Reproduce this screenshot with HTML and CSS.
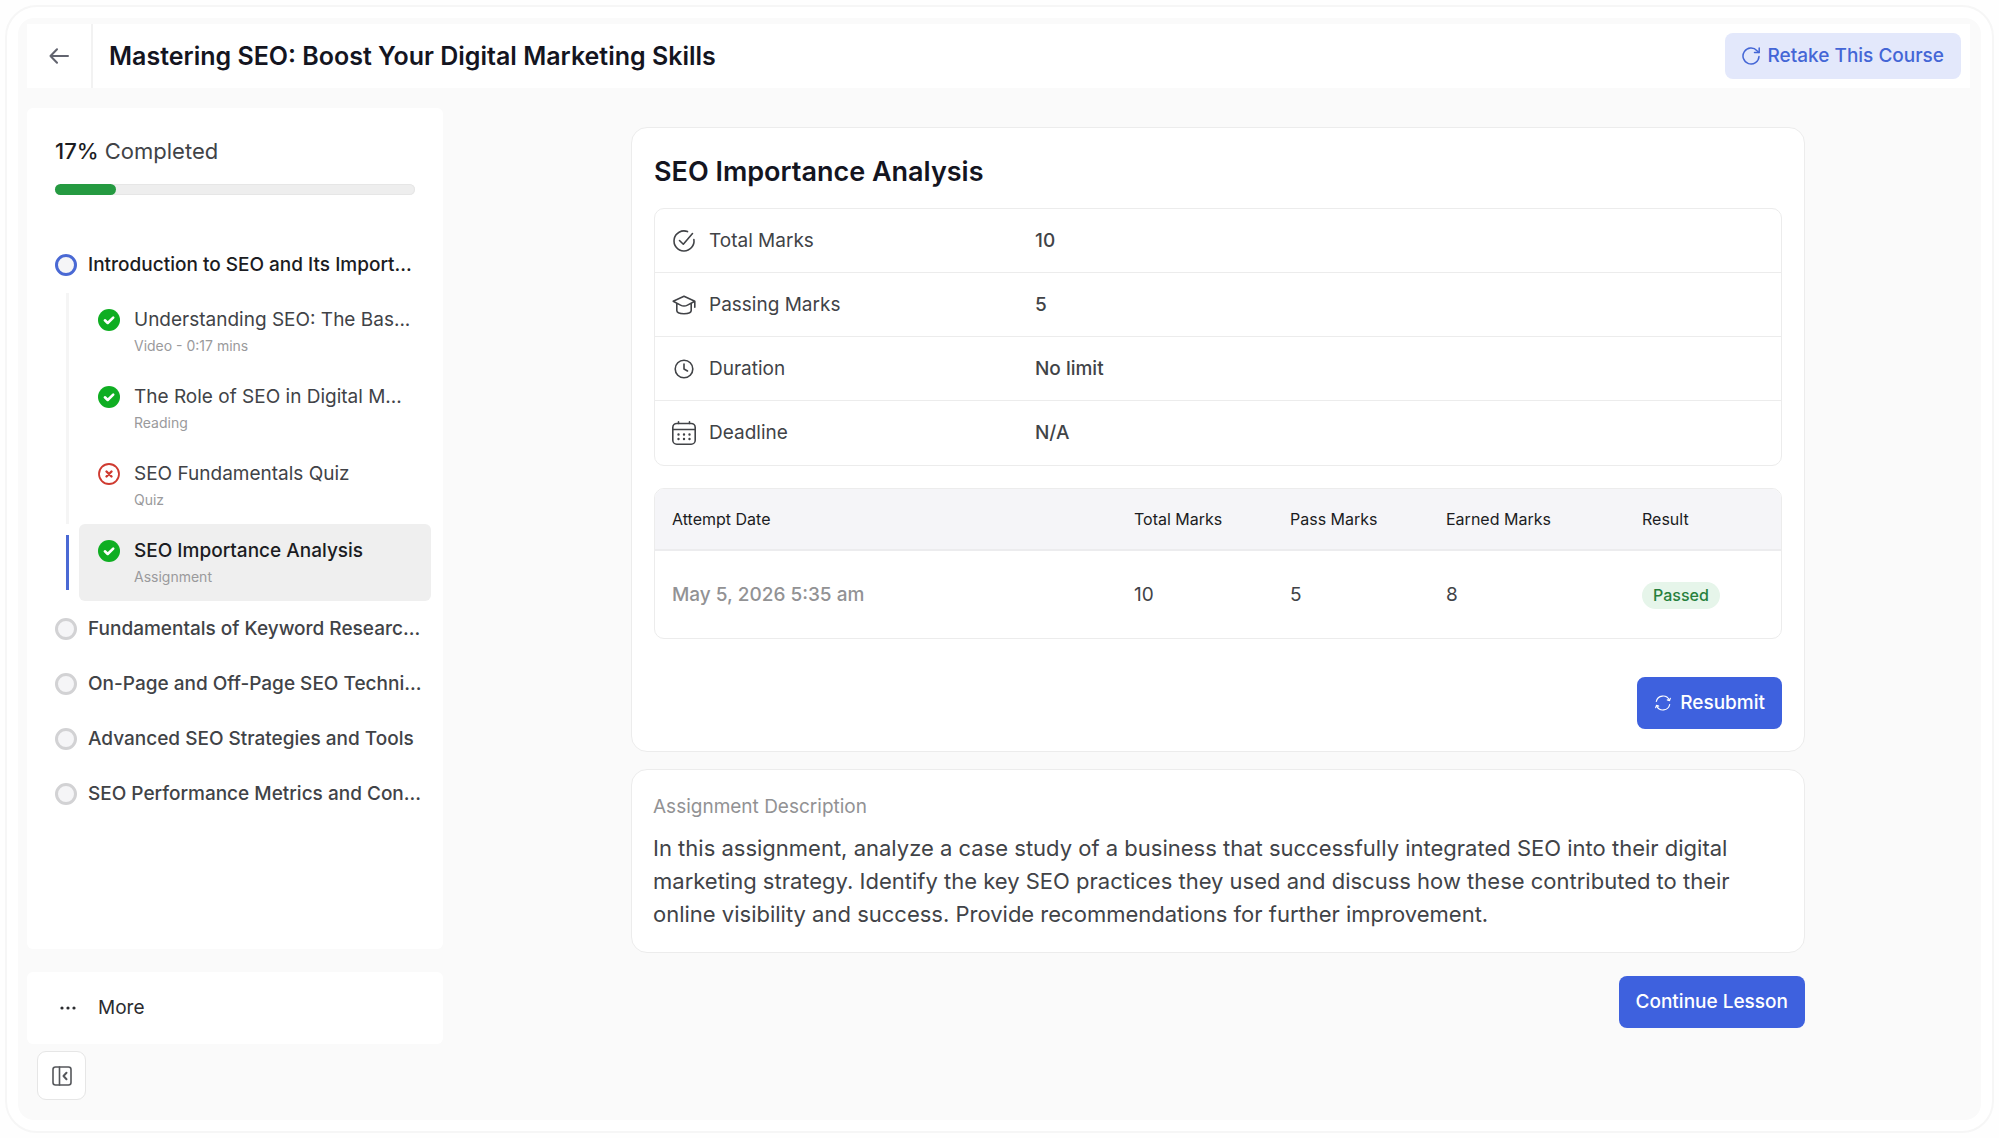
FILE: index.html
```html
<!DOCTYPE html>
<html lang="en">
<head>
    <meta charset="UTF-8">
    <meta name="viewport" content="width=device-width, initial-scale=1.0">
    <link rel="stylesheet" href="styles.css">
    <title>Mastering SEO: Boost Your Digital Marketing Skills</title>
</head>
<body>
    <!-- Shared lesson status icons -->
    <svg class="sprite" aria-hidden="true">
        <symbol id="icon-done" viewBox="0 0 22 22">
            <circle cx="11" cy="11" r="11" fill="#0fae22"/>
            <path d="M6.900 11.300l2.800 2.700 5.500-5.400" fill="none" stroke="#fff" stroke-width="2.600" stroke-linecap="round" stroke-linejoin="round"/>
        </symbol>
        <symbol id="icon-failed" viewBox="0 0 22 22">
            <circle cx="11" cy="11" r="10" fill="#fff" stroke="#cf3a30" stroke-width="1.800"/>
            <path d="M8.500 8.500l5 5M13.500 8.500l-5 5" fill="none" stroke="#cf3a30" stroke-width="2.400" stroke-linecap="round"/>
        </symbol>
    </svg>

    <div class="frame">
        <div class="app">
            <header class="topbar">
                <a href="#" class="back" aria-label="Back">
                    <svg width="20" height="16" viewBox="0 0 20 16"><path d="M19 8H1.500M8 1.200L1.500 8 8 14.800" fill="none" stroke="currentColor" stroke-width="2" stroke-linecap="round" stroke-linejoin="round"/></svg>
                </a>
                <h1>Mastering SEO: Boost Your Digital Marketing Skills</h1>
                <button type="button" class="btn btn-light">
                    <svg width="18" height="18" viewBox="0 0 18 18" fill="none" stroke="currentColor" stroke-width="1.500" stroke-linecap="round" stroke-linejoin="round"><path d="M17 9.500A8 8 0 1 1 15 3.700L17 5.500"/><path d="M17.200 1v4.600h-4.700"/></svg>
                    Retake This Course
                </button>
            </header>

            <div class="layout">
                <aside class="sidebar">
                    <nav class="panel curriculum" aria-label="Course content">
                        <p class="progress-label" id="progress-label"><strong>17%</strong> Completed</p>
                        <div class="progress" role="progressbar" aria-labelledby="progress-label" aria-valuenow="17" aria-valuemin="0" aria-valuemax="100">
                            <div class="progress-bar" style="width: 17%"></div>
                        </div>

                        <ul class="topics">
                            <li>
                                <button type="button" class="topic current"><span class="ring"></span>Introduction to SEO and Its Import...</button>
                                <ul class="lessons">
                                    <li>
                                        <a href="#" class="lesson">
                                            <svg width="22" height="22"><use href="#icon-done"/></svg>
                                            <span>Understanding SEO: The Bas...</span>
                                            <small>Video - 0:17 mins</small>
                                        </a>
                                    </li>
                                    <li>
                                        <a href="#" class="lesson">
                                            <svg width="22" height="22"><use href="#icon-done"/></svg>
                                            <span>The Role of SEO in Digital M...</span>
                                            <small>Reading</small>
                                        </a>
                                    </li>
                                    <li>
                                        <a href="#" class="lesson">
                                            <svg width="22" height="22"><use href="#icon-failed"/></svg>
                                            <span>SEO Fundamentals Quiz</span>
                                            <small>Quiz</small>
                                        </a>
                                    </li>
                                    <li class="active">
                                        <a href="#" class="lesson" aria-current="page">
                                            <svg width="22" height="22"><use href="#icon-done"/></svg>
                                            <span>SEO Importance Analysis</span>
                                            <small>Assignment</small>
                                        </a>
                                    </li>
                                </ul>
                            </li>
                            <li><button type="button" class="topic"><span class="ring"></span>Fundamentals of Keyword Researc...</button></li>
                            <li><button type="button" class="topic"><span class="ring"></span>On-Page and Off-Page SEO Techni...</button></li>
                            <li><button type="button" class="topic"><span class="ring"></span>Advanced SEO Strategies and Tools</button></li>
                            <li><button type="button" class="topic"><span class="ring"></span>SEO Performance Metrics and Con...</button></li>
                        </ul>
                    </nav>

                    <button type="button" class="panel more">
                        <svg width="16" height="4" viewBox="0 0 16 4" fill="currentColor"><circle cx="2" cy="2" r="1.600"/><circle cx="8" cy="2" r="1.600"/><circle cx="14" cy="2" r="1.600"/></svg>
                        More
                    </button>
                    <button type="button" class="collapse" aria-label="Collapse sidebar">
                        <svg width="20" height="20" viewBox="0 0 20 20" fill="none" stroke="currentColor" stroke-width="1.600" stroke-linecap="round" stroke-linejoin="round"><rect x="1" y="1" width="18" height="18" rx="2.500"/><path d="M7.500 1v18"/><path d="M14.500 6.800L11.500 10l3 3.200" stroke-width="2"/></svg>
                    </button>
                </aside>

                <main class="content">
                    <section class="card">
                        <h2>SEO Importance Analysis</h2>
                        <table class="facts">
                            <tr>
                                <th scope="row"><span>
                                    <svg width="24" height="24" viewBox="0 0 24 24"><path d="M15.500 2.600A10 10 0 1 0 21.900 10.500"/><path d="M7.500 11.500l3.800 3.700L20.500 4.500"/></svg>
                                    Total Marks</span></th>
                                <td>10</td>
                            </tr>
                            <tr>
                                <th scope="row"><span>
                                    <svg width="24" height="24" viewBox="0 0 24 24"><path d="M1.200 8.200L12 3.300l10.800 4.900-7.300 3.900c-2.200 1.200-4.800 1.200-7 0zM4.800 10.500v7c0 2 3 3.200 7.200 3.200s7.200-1.200 7.200-3.200v-7M22.800 8.200v6"/></svg>
                                    Passing Marks</span></th>
                                <td>5</td>
                            </tr>
                            <tr>
                                <th scope="row"><span>
                                    <svg width="24" height="24" viewBox="0 0 24 24"><circle cx="12" cy="12" r="8.800"/><path d="M12 7v5l3.500 2"/></svg>
                                    Duration</span></th>
                                <td>No limit</td>
                            </tr>
                            <tr>
                                <th scope="row"><span>
                                    <svg width="24" height="24" viewBox="0 0 24 24"><rect x="0.800" y="2.500" width="22.400" height="20.700" rx="4"/><path d="M1 8.500h22M6.500 .8v1.700M17.500 .8v1.700"/><path class="dots" d="M6.500 13.500h.01M12 13.500h.01M17.500 13.500h.01M6.500 18h.01M12 18h.01M17.500 18h.01"/></svg>
                                    Deadline</span></th>
                                <td>N/A</td>
                            </tr>
                        </table>

                        <table class="attempts">
                            <colgroup><col><col class="col-marks"><col class="col-marks"><col class="col-earned"><col class="col-marks"></colgroup>
                            <thead>
                                <tr>
                                    <th scope="col">Attempt Date</th>
                                    <th scope="col">Total Marks</th>
                                    <th scope="col">Pass Marks</th>
                                    <th scope="col">Earned Marks</th>
                                    <th scope="col">Result</th>
                                </tr>
                            </thead>
                            <tbody>
                                <tr>
                                    <td class="date">May 5, 2026 5:35 am</td>
                                    <td>10</td>
                                    <td>5</td>
                                    <td>8</td>
                                    <td><span class="badge">Passed</span></td>
                                </tr>
                            </tbody>
                        </table>

                        <div class="actions">
                            <button type="button" class="btn btn-primary">
                                <svg width="16" height="16" viewBox="0 0 16 16" fill="none" stroke="currentColor" stroke-width="1.200" stroke-linecap="round" stroke-linejoin="round"><path d="M1.300 6.500A6.900 6.900 0 0 1 14.300 5M14.700 9.500A6.900 6.900 0 0 1 1.700 11"/><path d="M15.300 3.400l-.8 2.200-2.200-.7M.7 12.600l.8-2.200 2.200.7"/></svg>
                                Resubmit
                            </button>
                        </div>
                    </section>

                    <section class="card description">
                        <h3>Assignment Description</h3>
                        <p>In this assignment, analyze a case study of a business that successfully integrated SEO into their digital marketing strategy. Identify the key SEO practices they used and discuss how these contributed to their online visibility and success. Provide recommendations for further improvement.</p>
                    </section>

                    <div class="next">
                        <button type="button" class="btn btn-primary">Continue Lesson</button>
                    </div>
                </main>
            </div>
        </div>
    </div>
</body>
</html>
```
FILE: styles.css
```css
/* Global Styles */
* {
    box-sizing: border-box;
}

body {
    margin: 0;
    padding: 5px;
    min-height: 100vh;
    display: flex;
    font-family: Inter, sans-serif;
    font-size: 19px;
    line-height: 28px;
    color: #414347;
    background-color: #fefefe;
}

h1, h2, h3, p, ul {
    margin: 0;
    padding: 0;
}

ul {
    list-style: none;
}

a {
    color: inherit;
    text-decoration: none;
}

button {
    font: inherit;
    color: inherit;
    cursor: pointer;
}

svg {
    flex: none;
}

.sprite {
    position: absolute;
    width: 0;
    height: 0;
}

/* Page frame */
.frame {
    flex: 1;
    display: flex;
    padding: 11px;
    border: 2px solid #f6f6f6;
    border-radius: 32px;
    background-color: #fff;
}

.app {
    flex: 1;
    display: flex;
    flex-direction: column;
    gap: 20px;
    padding: 6px 11px 20px 9px;
    border-radius: 16px;
    background-color: #fafafa;
}

/* Header */
.topbar {
    display: flex;
    align-items: center;
    height: 64px;
    padding-right: 9px;
    background-color: #fff;
}

.back {
    display: flex;
    align-items: center;
    justify-content: center;
    width: 66px;
    height: 100%;
    border-right: 2px solid #f2f2f2;
    color: #62646f;
}

h1 {
    flex: 1;
    padding-left: 16px;
    font-size: 25px;
    font-weight: 600;
    color: #14151f;
}

.btn {
    display: inline-flex;
    align-items: center;
    gap: 8px;
    border: none;
    border-radius: 8px;
    font-weight: 500;
}

.btn-light {
    height: 46px;
    padding: 0 17px;
    background-color: #e3e8fb;
    color: #4466d6;
}

.btn-primary {
    height: 52px;
    padding: 0 17px;
    background-color: #3e61de;
    color: #fff;
}

/* Sidebar */
.layout {
    flex: 1;
    display: flex;
    gap: 23px;
}

.sidebar {
    flex: none;
    display: flex;
    flex-direction: column;
    width: 416px;
}

.panel {
    border: none;
    border-radius: 6px;
    background-color: #fff;
}

.curriculum {
    flex: 1;
    padding: 28px 12px 28px 28px;
}

.progress-label {
    font-size: 22px;
    line-height: 30px;
}

.progress-label strong {
    font-weight: 500;
    color: #1b1c22;
}

.progress {
    height: 11px;
    margin: 18px 16px 42px 0;
    border-radius: 6px;
    background-color: #eee;
    box-shadow: inset 0 0 0 1px #e6e6e6;
}

.progress-bar {
    height: 100%;
    border-radius: 6px;
    background-color: #259a41;
}

.topic {
    display: flex;
    align-items: center;
    gap: 11px;
    width: 100%;
    height: 55px;
    padding: 0;
    border: none;
    background: none;
    font-weight: 500;
    text-align: left;
    white-space: nowrap;
}

.topic.current {
    color: #1b1c22;
}

.ring {
    flex: none;
    width: 22px;
    height: 22px;
    border: 3px solid #d2d2d4;
    border-radius: 50%;
    background-color: #f5f5f7;
}

.current .ring {
    border-color: #4a69d4;
}

.lessons {
    margin: 1px 0 0 11px;
}

.lessons li {
    display: flex;
    align-items: center;
    gap: 10px;
}

.lessons li::before {
    content: "";
    align-self: stretch;
    width: 3px;
    background-color: #f5f5f5;
}

.lessons .active::before {
    margin: 11px 0;
    background-color: #4a69d4;
}

.lesson {
    flex: 1;
    display: grid;
    grid-template-columns: 22px 1fr;
    align-items: center;
    gap: 2px 14px;
    padding: 13px 12px 14px 19px;
    border-radius: 6px;
    white-space: nowrap;
}

.lesson small {
    grid-column: 2;
    font-size: 14px;
    line-height: 20px;
    color: #9a9a9c;
}

.active .lesson {
    background-color: #efefef;
    color: #1b1c22;
    font-weight: 500;
}

.active small {
    font-weight: 400;
}

.more {
    display: flex;
    align-items: center;
    gap: 22px;
    height: 72px;
    margin: 23px 0 7px;
    padding: 0 33px;
    color: #2b2c30;
}

.collapse {
    display: flex;
    align-items: center;
    justify-content: center;
    width: 49px;
    height: 49px;
    margin-left: 10px;
    border: 1px solid #e6e6e6;
    border-radius: 9px;
    background-color: #fff;
    color: #55575b;
}

/* Main Content */
.content {
    flex: 1;
    max-width: 1174px;
    margin: 0 auto;
    padding-top: 19px;
}

.card {
    margin-bottom: 17px;
    padding: 26px 22px 22px;
    border: 1px solid #ececec;
    border-radius: 16px;
    background-color: #fff;
}

h2 {
    margin-bottom: 18px;
    font-size: 27px;
    line-height: 36px;
    font-weight: 600;
    color: #14151f;
}

table {
    width: 100%;
    border: 1px solid #ececec;
    border-collapse: separate;
    border-spacing: 0;
    border-radius: 10px;
    overflow: hidden;
    table-layout: fixed;
}

th, td {
    padding: 0 17px;
    text-align: left;
    font-weight: 400;
}

.facts {
    margin-bottom: 22px;
}

.facts th, .facts td {
    height: 64px;
    border-bottom: 1px solid #ececec;
}

.facts tr:last-child > * {
    border-bottom: none;
}

.facts th {
    width: 363px;
}

.facts th span {
    display: flex;
    align-items: center;
    gap: 13px;
}

.facts td {
    font-weight: 500;
}

.facts svg {
    fill: none;
    stroke: currentColor;
    stroke-width: 1.6;
    stroke-linecap: round;
    stroke-linejoin: round;
}

.facts .dots {
    stroke-width: 2.4;
}

.col-marks {
    width: 156px;
}

.col-earned {
    width: 196px;
}

.attempts th {
    height: 62px;
    border-bottom: 2px solid #ececee;
    background-color: #f5f5f8;
    font-size: 16px;
    color: #1b1c22;
}

.attempts td {
    height: 87px;
}

.attempts .date {
    font-weight: 500;
    color: #929294;
}

.badge {
    display: inline-block;
    padding: 0 11px;
    border-radius: 14px;
    background-color: #e6f5ea;
    font-size: 16px;
    font-weight: 500;
    line-height: 27px;
    color: #26803c;
}

.actions, .next {
    display: flex;
    justify-content: flex-end;
}

.actions {
    margin-top: 38px;
}

.actions .btn {
    gap: 9px;
    padding: 0 17px 0 18px;
}

.description {
    margin-bottom: 23px;
    padding: 23px 21px 21px;
}

h3 {
    margin-bottom: 11px;
    font-size: 19px;
    line-height: 28px;
    font-weight: 400;
    color: #929294;
}

.description p {
    font-size: 22px;
    line-height: 33px;
}
```
